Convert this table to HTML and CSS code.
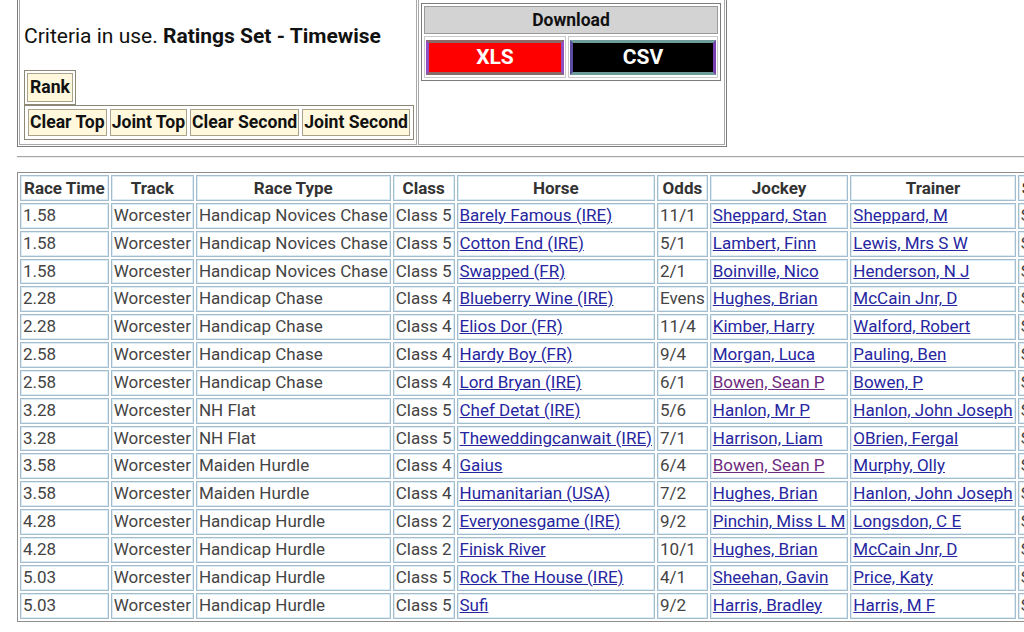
FILE: index.html
```html
<!DOCTYPE html>
<html>
<head>
<meta charset="utf-8">
<link rel="stylesheet" href="styles.css">
</head>
<body>
<table class="top">
  <tr>
    <td class="crit">
      <div class="crit-inner">
        <p class="crit-text">Criteria in use. <b>Ratings Set - Timewise</b></p>
        <table class="btns rank"><tr><td>Rank</td></tr></table>
        <table class="btns"><tr><td>Clear Top</td><td>Joint Top</td><td>Clear Second</td><td>Joint Second</td></tr></table>
      </div>
    </td>
    <td class="dl">
      <table class="dltable">
        <tr><th colspan="2">Download</th></tr>
        <tr>
          <td class="dlcell"><div class="dlbtn xls">XLS</div></td>
          <td class="dlcell"><div class="dlbtn csv">CSV</div></td>
        </tr>
      </table>
    </td>
  </tr>
</table>
<div class="rule"></div>
<div class="wrap">
<table class="races">
  <tr>
    <th>Race Time</th><th>Track</th><th>Race Type</th><th>Class</th><th>Horse</th><th>Odds</th><th>Jockey</th><th>Trainer</th><th>Sire</th>
  </tr>
  <tr><td>1.58</td><td>Worcester</td><td>Handicap Novices Chase</td><td>Class 5</td><td><a href="#">Barely Famous (IRE)</a></td><td>11/1</td><td><a href="#">Sheppard, Stan</a></td><td><a href="#">Sheppard, M</a></td><td>Sel</td></tr>
  <tr><td>1.58</td><td>Worcester</td><td>Handicap Novices Chase</td><td>Class 5</td><td><a href="#">Cotton End (IRE)</a></td><td>5/1</td><td><a href="#">Lambert, Finn</a></td><td><a href="#">Lewis, Mrs S W</a></td><td>Sel</td></tr>
  <tr><td>1.58</td><td>Worcester</td><td>Handicap Novices Chase</td><td>Class 5</td><td><a href="#">Swapped (FR)</a></td><td>2/1</td><td><a href="#">Boinville, Nico</a></td><td><a href="#">Henderson, N J</a></td><td>Sel</td></tr>
  <tr><td>2.28</td><td>Worcester</td><td>Handicap Chase</td><td>Class 4</td><td><a href="#">Blueberry Wine (IRE)</a></td><td>Evens</td><td><a href="#">Hughes, Brian</a></td><td><a href="#">McCain Jnr, D</a></td><td>Sel</td></tr>
  <tr><td>2.28</td><td>Worcester</td><td>Handicap Chase</td><td>Class 4</td><td><a href="#">Elios Dor (FR)</a></td><td>11/4</td><td><a href="#">Kimber, Harry</a></td><td><a href="#">Walford, Robert</a></td><td>Sel</td></tr>
  <tr><td>2.58</td><td>Worcester</td><td>Handicap Chase</td><td>Class 4</td><td><a href="#">Hardy Boy (FR)</a></td><td>9/4</td><td><a href="#">Morgan, Luca</a></td><td><a href="#">Pauling, Ben</a></td><td>Sel</td></tr>
  <tr><td>2.58</td><td>Worcester</td><td>Handicap Chase</td><td>Class 4</td><td><a href="#">Lord Bryan (IRE)</a></td><td>6/1</td><td><a href="#" class="visited">Bowen, Sean P</a></td><td><a href="#">Bowen, P</a></td><td>Sel</td></tr>
  <tr><td>3.28</td><td>Worcester</td><td>NH Flat</td><td>Class 5</td><td><a href="#">Chef Detat (IRE)</a></td><td>5/6</td><td><a href="#">Hanlon, Mr P</a></td><td><a href="#">Hanlon, John Joseph</a></td><td>Sel</td></tr>
  <tr><td>3.28</td><td>Worcester</td><td>NH Flat</td><td>Class 5</td><td><a href="#">Theweddingcanwait (IRE)</a></td><td>7/1</td><td><a href="#">Harrison, Liam</a></td><td><a href="#">OBrien, Fergal</a></td><td>Sel</td></tr>
  <tr><td>3.58</td><td>Worcester</td><td>Maiden Hurdle</td><td>Class 4</td><td><a href="#">Gaius</a></td><td>6/4</td><td><a href="#" class="visited">Bowen, Sean P</a></td><td><a href="#">Murphy, Olly</a></td><td>Sel</td></tr>
  <tr><td>3.58</td><td>Worcester</td><td>Maiden Hurdle</td><td>Class 4</td><td><a href="#">Humanitarian (USA)</a></td><td>7/2</td><td><a href="#">Hughes, Brian</a></td><td><a href="#">Hanlon, John Joseph</a></td><td>Sel</td></tr>
  <tr><td>4.28</td><td>Worcester</td><td>Handicap Hurdle</td><td>Class 2</td><td><a href="#">Everyonesgame (IRE)</a></td><td>9/2</td><td><a href="#">Pinchin, Miss L M</a></td><td><a href="#">Longsdon, C E</a></td><td>Sel</td></tr>
  <tr><td>4.28</td><td>Worcester</td><td>Handicap Hurdle</td><td>Class 2</td><td><a href="#">Finisk River</a></td><td>10/1</td><td><a href="#">Hughes, Brian</a></td><td><a href="#">McCain Jnr, D</a></td><td>Sel</td></tr>
  <tr><td>5.03</td><td>Worcester</td><td>Handicap Hurdle</td><td>Class 5</td><td><a href="#">Rock The House (IRE)</a></td><td>4/1</td><td><a href="#">Sheehan, Gavin</a></td><td><a href="#">Price, Katy</a></td><td>Sel</td></tr>
  <tr><td>5.03</td><td>Worcester</td><td>Handicap Hurdle</td><td>Class 5</td><td><a href="#">Sufi</a></td><td>9/2</td><td><a href="#">Harris, Bradley</a></td><td><a href="#">Harris, M F</a></td><td>Sel</td></tr>
</table>
</div>
</body>
</html>
```

FILE: styles.css
```css
html, body {
  margin: 0;
  padding: 0;
  overflow: hidden;
  background: #ffffff;
}
body {
  font-family: Roboto, "Liberation Sans", sans-serif;
  font-size: 16px;
  color: #000;
}

/* ---------- top block ---------- */
.top {
  margin: -3px 0 0 17px;
  border: 1px solid #7c7c7c;
  border-spacing: 1px;
  border-collapse: separate;
}
.top > tbody > tr > td {
  border: 1px solid #a8a8a8;
  padding: 0;
  vertical-align: top;
}
.crit { width: 396px; height: 144px; }
.dl { width: 305px; }

.crit-inner {
  display: flex;
  flex-direction: column;
  align-items: flex-start;
  padding: 0 0 0 4px;
}
.crit-text {
  margin: 24px 0 0 0;
  font-size: 21px;
  line-height: 25px;
  color: #111;
}
.crit-text b { font-weight: 700; }

.btns {
  border: 1px solid #8d8776;
  border-spacing: 3px;
  border-collapse: separate;
  margin: 0;
}
.btns td {
  background: #fff8dc;
  border: 1px solid #aaa28a;
  font-weight: 700;
  font-size: 17.6px;
  line-height: 21px;
  padding: 2px 1px;
  color: #111;
  white-space: nowrap;
}
.rank { margin-top: 21px; border-spacing: 2px; }
.btns.rank td { padding: 3px 2px; }

.dltable {
  margin: 3px 0 0 2px;
  width: 300px;
  border: 1px solid #7c7c7c;
  border-spacing: 2px;
  border-collapse: separate;
}
.dltable th {
  background: #d3d3d3;
  border: 1px solid #9a9a9a;
  font-size: 17.5px;
  font-weight: 700;
  line-height: 26px;
  padding: 0;
  color: #111;
}
.dlcell {
  border: 1px solid #c9c9c9;
  padding: 3px 1px 2px;
}
.dlbtn {
  color: #fff;
  font-weight: 700;
  font-size: 21px;
  line-height: 29px;
  text-align: center;
  border: 3px solid #7a7a7a;
  border-left-color: #8f4fc0;
  border-right-color: #8f4fc0;
}
.xls { background: #ff0000; border-top-color: #8c6a6a; border-bottom-color: #8c6a6a; }
.csv { background: #000000; border-top-color: #6f9c9c; border-bottom-color: #6f9c9c; border-left-color: #5a4aa0; border-right-color: #7a3fb0; }

/* ---------- rule ---------- */
.rule {
  margin: 9px 0 0 17px;
  border-top: 1px solid #a6a6a6;
  border-bottom: 1px solid #ececec;
}

/* ---------- race table ---------- */
.wrap {
  margin-top: 14px;
  overflow: hidden;
}
.races {
  margin-left: 17px;
  border: 1px solid #8e8e8e;
  border-right: none;
  border-spacing: 2px;
  border-collapse: separate;
  white-space: nowrap;
}
.races th, .races td {
  border: 1px solid #a4bccb;
  box-shadow: inset 0 0 0 1px #dcecf5;
  padding: 2px 2px;
  line-height: 19.85px;
  font-size: 17px;
}
.races th {
  font-weight: 700;
  color: #333;
  text-align: center;
  padding: 3px 3px 1px;
}
.races td {
  color: #444;
  text-align: left;
}
.races a {
  color: #2626a0;
  text-decoration: underline;
}
.races a.visited { color: #6e2a80; }
```
